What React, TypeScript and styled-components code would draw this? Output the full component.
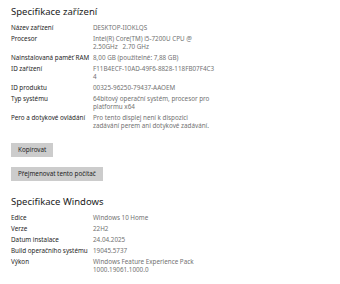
import React from "react";
import styled, { createGlobalStyle } from "styled-components";

const Global = createGlobalStyle`
  html, body {
    margin: 0;
    padding: 0;
    background: #ffffff;
  }
  body {
    font-family: "Noto Sans", "Open Sans", sans-serif;
  }
`;

const Page = styled.div`
  width: 340px;
  height: 284px;
  overflow: hidden;
  padding: 6px 11px 0;
  box-sizing: border-box;
  display: flex;
  flex-direction: column;
`;

const Heading = styled.h2<{ $top?: number }>`
  margin: ${(p) => p.$top ?? 0}px 0 6px;
  font-size: 9.5px;
  line-height: 12px;
  font-weight: 400;
  color: #1b1b1b;
`;

const SpecGrid = styled.div`
  display: grid;
  grid-template-columns: 82px 123.5px;
  row-gap: 3px;
  font-size: 6.3px;
  line-height: 8px;
`;

const Label = styled.div`
  color: #1e1e1e;
  white-space: nowrap;
`;

const Value = styled.div<{ $breakAll?: boolean }>`
  color: #727272;
  white-space: pre-wrap;
  word-break: ${(p) => (p.$breakAll ? "break-all" : "normal")};
`;

const Button = styled.button<{ $top: number }>`
  align-self: flex-start;
  margin-top: ${(p) => p.$top}px;
  height: 14px;
  padding: 0 7px;
  border: none;
  background: #cccccc;
  color: #1e1e1e;
  font-family: inherit;
  font-size: 6.3px;
  line-height: 14px;
`;

type Row = { label: string; value: string; breakAll?: boolean };

const device: Row[] = [
  { label: "Název zařízení", value: "DESKTOP-IIOKLQS" },
  { label: "Procesor", value: "Intel(R) Core(TM) i5-7200U CPU @ 2.50GHz   2.70 GHz" },
  { label: "Nainstalovaná paměť RAM", value: "8,00 GB (použitelné: 7,88 GB)" },
  { label: "ID zařízení", value: "F11B4ECF-10AD-49F6-8828-118FB07F4C34", breakAll: true },
  { label: "ID produktu", value: "00325-96250-79437-AAOEM" },
  { label: "Typ systému", value: "64bitový operační systém, procesor pro platformu x64" },
  {
    label: "Pero a dotykové ovládání",
    value: "Pro tento displej není k dispozici\nzadávání perem ani dotykové zadávání.",
  },
];

const windows: Row[] = [
  { label: "Edice", value: "Windows 10 Home" },
  { label: "Verze", value: "22H2" },
  { label: "Datum instalace", value: "24.04.2025" },
  { label: "Build operačního systému", value: "19045.5737" },
  { label: "Výkon", value: "Windows Feature Experience Pack 1000.19061.1000.0" },
];

function Specs({ rows }: { rows: Row[] }) {
  return (
    <SpecGrid>
      {rows.map((r) => (
        <React.Fragment key={r.label}>
          <Label>{r.label}</Label>
          <Value $breakAll={r.breakAll}>{r.value}</Value>
        </React.Fragment>
      ))}
    </SpecGrid>
  );
}

export default function App() {
  return (
    <Page>
      <Global />
      <Heading>Specifikace zařízení</Heading>
      <Specs rows={device} />
      <Button $top={13}>Kopírovat</Button>
      <Button $top={10}>Přejmenovat tento počítač</Button>
      <Heading $top={15}>Specifikace Windows</Heading>
      <Specs rows={windows} />
    </Page>
  );
}
